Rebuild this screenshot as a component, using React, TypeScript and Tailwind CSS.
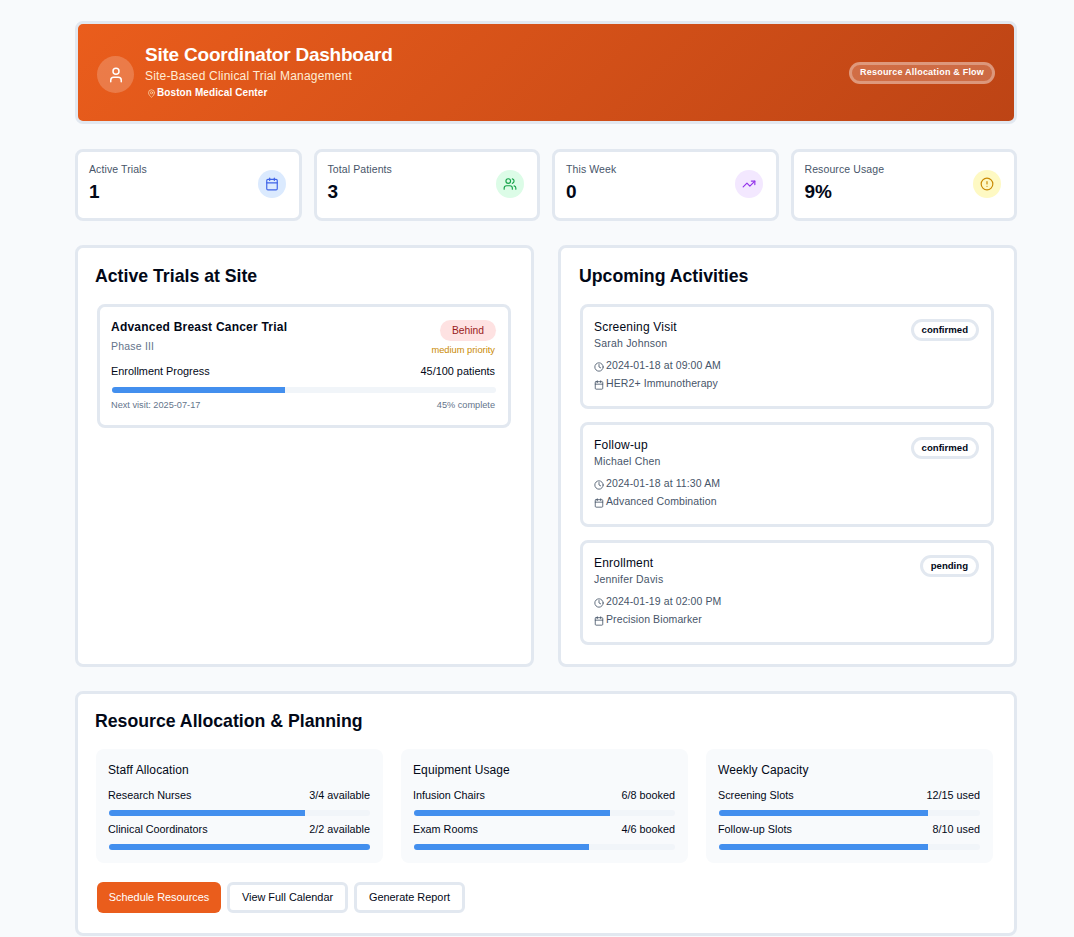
import { Calendar, Clock, MapPin, TrendingUp, User, Users, CircleAlert } from 'lucide-react';

const stats = [
  { label: 'Active Trials', value: '1', bg: 'bg-[#dbeafe]', color: 'text-[#3f63e8]', icon: Calendar },
  { label: 'Total Patients', value: '3', bg: 'bg-[#dcfce7]', color: 'text-[#16a34a]', icon: Users },
  { label: 'This Week', value: '0', bg: 'bg-[#f3e8ff]', color: 'text-[#9333ea]', icon: TrendingUp },
  { label: 'Resource Usage', value: '9%', bg: 'bg-[#fef9c3]', color: 'text-[#ca8a04]', icon: CircleAlert },
];

const activities = [
  { title: 'Screening Visit', person: 'Sarah Johnson', time: '2024-01-18 at 09:00 AM', trial: 'HER2+ Immunotherapy', status: 'confirmed' },
  { title: 'Follow-up', person: 'Michael Chen', time: '2024-01-18 at 11:30 AM', trial: 'Advanced Combination', status: 'confirmed' },
  { title: 'Enrollment', person: 'Jennifer Davis', time: '2024-01-19 at 02:00 PM', trial: 'Precision Biomarker', status: 'pending' },
];

const resources = [
  {
    title: 'Staff Allocation',
    rows: [
      { name: 'Research Nurses', value: '3/4 available', pct: 75 },
      { name: 'Clinical Coordinators', value: '2/2 available', pct: 100 },
    ],
  },
  {
    title: 'Equipment Usage',
    rows: [
      { name: 'Infusion Chairs', value: '6/8 booked', pct: 75 },
      { name: 'Exam Rooms', value: '4/6 booked', pct: 67 },
    ],
  },
  {
    title: 'Weekly Capacity',
    rows: [
      { name: 'Screening Slots', value: '12/15 used', pct: 80 },
      { name: 'Follow-up Slots', value: '8/10 used', pct: 80 },
    ],
  },
];

const Bar = ({ pct }: { pct: number }) => (
  <div className="h-[6px] ml-[1px] rounded-full bg-[#f1f5f9] overflow-hidden">
    <div className="h-full bg-[#438fee]" style={{ width: `${pct}%` }} />
  </div>
);

export default function App() {
  return (
    <div className="min-h-[937px] bg-[#f8fafc] pt-[21px] pl-[75px] text-[#020817] font-['Liberation_Sans',Arial,sans-serif]">
      <div className="w-[942px] flex flex-col">
        <header className="h-[103px] rounded-lg border-[3px] border-[#e2e8f0] bg-[linear-gradient(135deg,#ea5d1c,#bd4415)] px-[19px] flex items-center justify-between text-white">
          <div className="flex items-center gap-[11px]">
            <div className="w-[37px] h-[37px] mt-[4px] rounded-full bg-white/20 flex items-center justify-center">
              <User size={18} />
            </div>
            <div className="-mt-[2px]">
              <h1 className="text-[19px] leading-[24px] tracking-[-0.22px] font-bold">Site Coordinator Dashboard</h1>
              <p className="text-[12px] leading-[16px] tracking-[0.19px] text-[#ffedd5] mt-[1px]">Site-Based Clinical Trial Management</p>
              <p className="text-[10px] leading-[16px] tracking-[0.1px] mt-[1px] font-bold flex items-center gap-[1px]">
                <MapPin size={9} className="ml-[2px] mt-[2px] text-[#fed7aa]" />
                Boston Medical Center
              </p>
            </div>
          </div>
          <span className="rounded-full border-[3px] border-white/30 bg-white/20 px-[8px] h-[22px] flex items-center text-[9px] font-bold tracking-[0.2px]">
            Resource Allocation &amp; Flow
          </span>
        </header>

        <div className="grid grid-cols-4 gap-[12px] mt-[25px]">
          {stats.map((s) => (
            <div key={s.label} className="h-[72px] rounded-lg border-[3px] border-[#e2e8f0] bg-white pl-[11px] pr-[13px] flex items-center justify-between">
              <div className="-mt-[4px]">
                <p className="text-[10.5px] leading-[14px] tracking-[0.1px] text-[#475569]">{s.label}</p>
                <p className="text-[19px] leading-[24px] font-bold mt-[4px]">{s.value}</p>
              </div>
              <div className={`w-[28px] h-[28px] -mt-[3px] rounded-full flex items-center justify-center ${s.bg}`}>
                <s.icon size={14} className={s.color} />
              </div>
            </div>
          ))}
        </div>

        <div className="grid grid-cols-2 gap-[24px] mt-[24px]">
          <section className="h-[422px] rounded-lg border-[3px] border-[#e2e8f0] bg-white pl-[17px] pr-[17px] pt-[16px]">
            <h2 className="text-[17.7px] leading-[24px] font-bold">Active Trials at Site</h2>
            <div className="mt-[16px] ml-[2px] mr-[3px] rounded-lg border-[3px] border-[#e2e8f0] pl-[11px] pr-[13px] pt-[12px] h-[124px]">
              <div className="flex justify-between">
                <div>
                  <p className="text-[12px] leading-[16px] font-bold tracking-[0.22px]">Advanced Breast Cancer Trial</p>
                  <p className="text-[10.5px] leading-[14px] mt-[4px] tracking-[0.2px] text-[#64748b]">Phase III</p>
                </div>
                <div className="flex flex-col items-end -mr-[1px]">
                  <span className="h-[21px] w-[56px] mt-[1px] rounded-full bg-[#fee2e2] text-[#991b1b] text-[10.3px] flex items-center justify-center">Behind</span>
                  <span className="text-[9.3px] leading-[12px] mt-[3px] mr-[1px] text-[#ca8a04]">medium priority</span>
                </div>
              </div>
              <div className="flex justify-between text-[10.9px] leading-[14px] mt-[8px]">
                <span>Enrollment Progress</span>
                <span>45/100 patients</span>
              </div>
              <div className="mt-[9px] -mr-[1px]"><Bar pct={45} /></div>
              <div className="flex justify-between text-[9.2px] leading-[12px] mt-[6px] text-[#64748b]">
                <span>Next visit: 2025-07-17</span>
                <span>45% complete</span>
              </div>
            </div>
          </section>

          <section className="h-[422px] rounded-lg border-[3px] border-[#e2e8f0] bg-white pl-[18px] pr-[18px] pt-[16px]">
            <h2 className="text-[17.7px] leading-[24px] font-bold">Upcoming Activities</h2>
            <div className="mt-[16px] ml-[1px] mr-[2px] flex flex-col gap-[13px]">
              {activities.map((a) => (
                <div key={a.title} className="h-[105px] rounded-lg border-[3px] border-[#e2e8f0] pl-[11px] pr-[12px] pt-[12px] flex justify-between">
                  <div>
                    <p className="text-[12px] leading-[15px] mt-[1px] tracking-[0.2px]">{a.title}</p>
                    <p className="text-[10.5px] leading-[14px] mt-[1px] tracking-[0.2px] text-[#475569]">{a.person}</p>
                    <p className="text-[10.5px] leading-[14px] mt-[8px] tracking-[0.1px] text-[#475569] flex items-center gap-[2px]">
                      <Clock size={10} className="mt-[3px]" />
                      {a.time}
                    </p>
                    <p className="text-[10.5px] leading-[14px] mt-[4px] tracking-[0.1px] text-[#475569] flex items-center gap-[2px]">
                      <Calendar size={10} className="mt-[3px]" />
                      {a.trial}
                    </p>
                  </div>
                  <span className="h-[22px] rounded-full border-[3px] border-[#e2e8f0] px-[8px] flex items-center text-[9.6px] font-bold">{a.status}</span>
                </div>
              ))}
            </div>
          </section>
        </div>

        <section className="h-[245px] mt-[24px] rounded-lg border-[3px] border-[#e2e8f0] bg-white px-[17px] pt-[15px]">
          <h2 className="text-[17.7px] leading-[24px] font-bold">Resource Allocation &amp; Planning</h2>
          <div className="mt-[16px] ml-[1px] grid grid-cols-3 gap-[18px] w-[897px]">
            {resources.map((r) => (
              <div key={r.title} className="h-[114px] rounded-lg bg-[#f8fafc] pl-[12px] pr-[13px] pt-[13px]">
                <p className="text-[12px] leading-[16px] tracking-[0.1px]">{r.title}</p>
                <div className="flex flex-col mt-[10px]">
                  {r.rows.map((row) => (
                    <div key={row.name} className="h-[34px]">
                      <div className="flex justify-between text-[10.8px] leading-[14px]">
                        <span>{row.name}</span>
                        <span>{row.value}</span>
                      </div>
                      <div className="mt-[8px]"><Bar pct={row.pct} /></div>
                    </div>
                  ))}
                </div>
              </div>
            ))}
          </div>
          <div className="mt-[19px] ml-[2px] flex gap-[6px] text-[10.9px]">
            <button className="h-[31px] w-[124px] rounded-md bg-[#ea5d1c] text-white">Schedule Resources</button>
            <button className="h-[31px] w-[121px] rounded-md border-[3px] border-[#e2e8f0] bg-white">View Full Calendar</button>
            <button className="h-[31px] w-[111px] rounded-md border-[3px] border-[#e2e8f0] bg-white">Generate Report</button>
          </div>
        </section>
      </div>
    </div>
  );
}
